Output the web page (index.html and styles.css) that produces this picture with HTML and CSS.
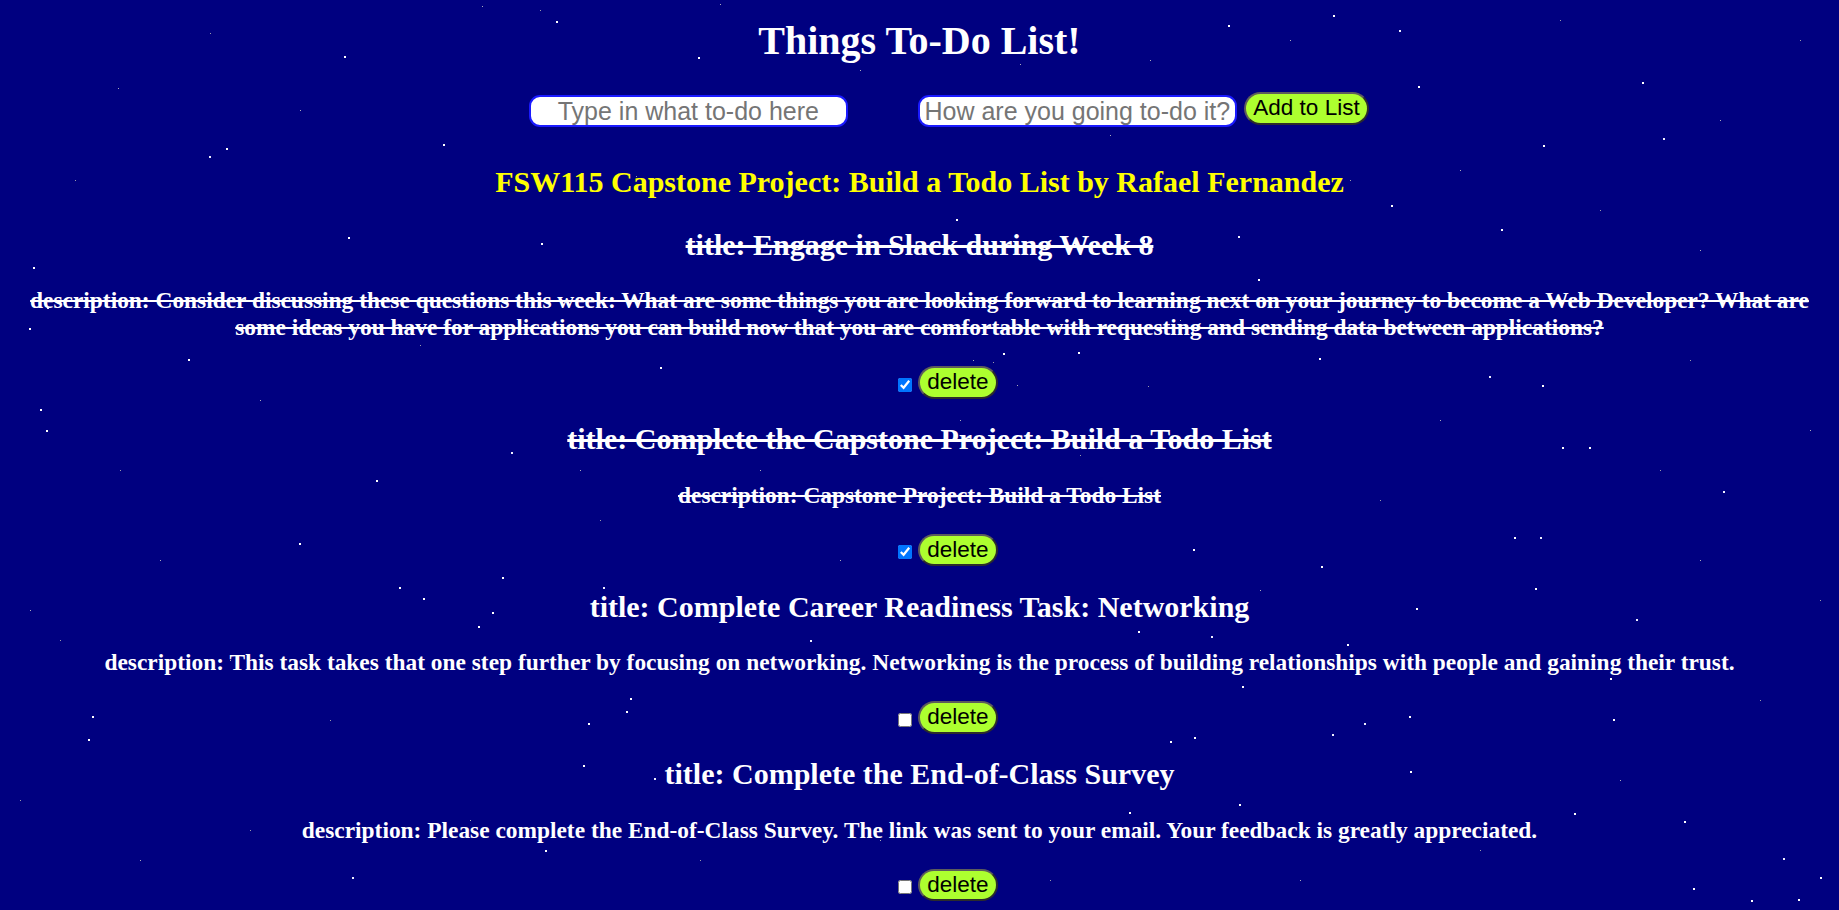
FILE: index.html
```html
<!DOCTYPE html>
<html lang="en">
<head>
<meta charset="utf-8">
<title>Things To-Do List!</title>
<link rel="stylesheet" href="styles.css">
</head>
<body>
<div class="sky" aria-hidden="true"><div class="stars-big"></div><div class="stars-small"></div></div>
<main class="page">
  <h1 class="app-title">Things To-Do List!</h1>
  <form class="entry">
    <input class="field field-title" type="text" placeholder="Type in what to-do here">
    <input class="field field-desc" type="text" placeholder="How are you going to-do it?">
    <button class="btn btn-add" type="button">Add to List</button>
  </form>
  <h2 class="credit">FSW115 Capstone Project: Build a Todo List by Rafael Fernandez</h2>
  <ul class="todos">
    <li class="todo is-done">
      <h2 class="todo-title">title: Engage in Slack during Week 8</h2>
      <h3 class="todo-desc">description: Consider discussing these questions this week: What are some things you are looking forward to learning next on your journey to become a Web Developer? What are some ideas you have for applications you can build now that you are comfortable with requesting and sending data between applications?</h3>
      <div class="todo-actions"><input class="check" type="checkbox" checked><button class="btn" type="button">delete</button></div>
    </li>
    <li class="todo is-done">
      <h2 class="todo-title">title: Complete the Capstone Project: Build a Todo List</h2>
      <h3 class="todo-desc">description: Capstone Project: Build a Todo List</h3>
      <div class="todo-actions"><input class="check" type="checkbox" checked><button class="btn" type="button">delete</button></div>
    </li>
    <li class="todo">
      <h2 class="todo-title">title: Complete Career Readiness Task: Networking</h2>
      <h3 class="todo-desc">description: This task takes that one step further by focusing on networking. Networking is the process of building relationships with people and gaining their trust.</h3>
      <div class="todo-actions"><input class="check" type="checkbox"><button class="btn" type="button">delete</button></div>
    </li>
    <li class="todo">
      <h2 class="todo-title">title: Complete the End-of-Class Survey</h2>
      <h3 class="todo-desc">description: Please complete the End-of-Class Survey. The link was sent to your email. Your feedback is greatly appreciated.</h3>
      <div class="todo-actions"><input class="check" type="checkbox"><button class="btn" type="button">delete</button></div>
    </li>
  </ul>
</main>
</body>
</html>
```

FILE: styles.css
```css
html, body {
  margin: 0;
  padding: 0;
  background: #000080;
}
body {
  font-family: "Liberation Serif", "Times New Roman", serif;
  color: #ffffff;
  min-height: 910px;
}
.sky {
  position: absolute;
  top: 0;
  left: 0;
  width: 0;
  height: 0;
}
.stars-big {
  position: absolute;
  top: 0;
  left: 0;
  width: 2px;
  height: 2px;
  box-shadow:
    556px 21px #fff, 344px 56px #fff, 698px 57px #fff, 615px 118px #eef, 443px 144px #fff,
    226px 148px #fff, 209px 156px #eef, 1228px 25px #fff, 1333px 15px #fff, 1399px 30px #eef,
    1418px 86px #fff, 1642px 82px #fff, 1663px 138px #eef, 1543px 145px #fff, 1391px 205px #fff,
    1501px 229px #fff, 956px 219px #fff, 348px 237px #fff, 541px 243px #fff, 1143px 240px #fff,
    1238px 236px #eef, 33px 267px #fff, 47px 307px #eef, 29px 328px #fff, 188px 359px #fff,
    660px 367px #fff, 1258px 279px #fff, 1319px 358px #fff, 1542px 385px #fff, 1489px 376px #eef,
    40px 409px #fff, 46px 430px #fff, 1562px 447px #fff, 1589px 447px #fff, 1723px 491px #eef,
    376px 480px #fff, 511px 452px #eef, 1514px 537px #fff, 1540px 537px #eef, 299px 543px #fff,
    1193px 549px #fff, 1321px 566px #fff, 502px 577px #fff, 399px 587px #fff, 423px 598px #fff,
    492px 612px #fff, 1535px 588px #fff, 1636px 619px #eef, 1610px 678px #fff, 1138px 631px #fff,
    1211px 636px #eef, 1416px 608px #fff, 88px 739px #fff, 92px 716px #fff, 1194px 737px #fff,
    1242px 686px #fff, 1332px 734px #eef, 1613px 719px #fff, 583px 765px #fff, 654px 778px #eef,
    1410px 771px #fff, 630px 698px #fff, 626px 711px #fff, 588px 723px #fff, 545px 850px #fff,
    1574px 813px #fff, 1783px 858px #eef, 1751px 900px #fff, 1684px 821px #fff, 352px 877px #eef,
    1820px 877px #fff, 1409px 716px #fff, 1364px 723px #eef, 1170px 741px #fff, 1239px 804px #fff,
    1129px 812px #fff, 1693px 888px #fff, 1798px 899px #fff, 1347px 644px #fff, 810px 640px #eef,
    478px 626px #fff, 603px 587px #eef, 1078px 352px #fff, 1003px 353px #fff;
}
.stars-small {
  position: absolute;
  top: 0;
  left: 0;
  width: 1px;
  height: 1px;
  box-shadow:
    1020px 64px #aab, 860px 70px #aab, 1290px 40px #aab, 720px 4px #aab, 482px 6px #aab,
    210px 33px #99a, 118px 88px #aab, 75px 180px #99a, 300px 110px #aab, 636px 176px #99a,
    1110px 135px #aab, 1260px 120px #99a, 1460px 170px #aab, 1600px 210px #99a, 1720px 120px #aab,
    1800px 40px #99a, 1760px 300px #aab, 1690px 360px #99a, 1810px 430px #aab, 1440px 300px #99a,
    1180px 320px #aab, 880px 300px #99a, 700px 330px #aab, 420px 345px #99a, 260px 400px #aab,
    120px 470px #99a, 160px 560px #aab, 60px 640px #99a, 230px 660px #aab, 330px 720px #99a,
    470px 820px #aab, 700px 860px #99a, 880px 840px #aab, 1050px 880px #99a, 1300px 880px #aab,
    1480px 850px #99a, 1620px 780px #aab, 1760px 700px #99a, 1700px 560px #aab, 1820px 600px #99a,
    960px 420px #aab, 1080px 455px #99a, 760px 470px #aab, 600px 520px #99a, 840px 560px #aab,
    1000px 600px #99a, 1260px 590px #aab, 1380px 500px #99a, 1440px 420px #aab, 1660px 470px #99a,
    30px 610px #aab, 20px 800px #99a, 140px 860px #aab, 250px 830px #99a, 580px 470px #aab,
    540px 10px #99a, 1150px 60px #aab, 1560px 20px #99a, 1700px 250px #aab, 1350px 180px #99a,
    973px 360px #aab, 993px 362px #99a, 1017px 385px #aab, 1148px 386px #99a;
}
.page {
  position: relative;
  padding: 18px 10px 1px;
  text-align: center;
}
.app-title {
  margin: 0;
  font-size: 40px;
  line-height: 46px;
  font-weight: bold;
}
.entry {
  display: flex;
  justify-content: center;
  align-items: flex-start;
  margin: 28px 0 0;
  padding-left: 59px;
}
.field {
  box-sizing: border-box;
  width: 319px;
  height: 32px;
  margin: 3px 0 0;
  padding: 0 1px;
  border: 2px solid #1a1aff;
  border-radius: 11px;
  background: #ffffff;
  font-family: "Liberation Sans", Arial, sans-serif;
  font-size: 25px;
  color: #000;
  text-align: center;
  outline: none;
}
.field::placeholder {
  color: #757575;
}
.field-title {
  margin-right: 70px;
}
.field-desc {
  margin-right: 7px;
}
.btn {
  margin: 0;
  padding: 1.25px 7.5px;
  border: 2px solid;
  border-color: #5c5c5c #2c2c2c #2c2c2c #5c5c5c;
  border-radius: 17px;
  background: #adff2f;
  color: #000;
  font-family: "Liberation Sans", Arial, sans-serif;
  font-size: 22.5px;
  line-height: normal;
}
.credit {
  margin: 38px 0 28px;
  font-size: 30px;
  line-height: 34.5px;
  color: #ffff00;
}
.todos {
  list-style: none;
  margin: 0;
  padding: 0;
}
.todo-title {
  margin: 23.5px 0 25px;
  font-size: 30px;
  line-height: 34.5px;
}
.todo-desc {
  margin: 23.4px 0 25px;
  font-size: 23.4px;
  line-height: 27px;
}
.is-done .todo-title,
.is-done .todo-desc {
  text-decoration: line-through;
}
.todo-actions {
  display: flex;
  justify-content: center;
  align-items: flex-start;
  padding-left: 57px;
  margin-bottom: 23.5px;
}
.check {
  width: 14px;
  height: 14px;
  margin: 11.7px 5.6px 0 0;
}
```
